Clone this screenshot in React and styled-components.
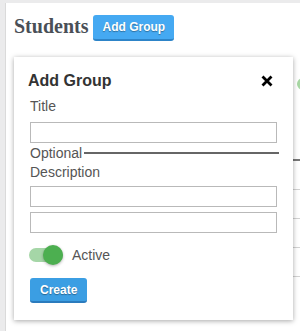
import React from "react";
import styled, { createGlobalStyle } from "styled-components";

const GlobalStyle = createGlobalStyle`
  html, body {
    margin: 0;
    padding: 0;
    background: #ebebec;
    overflow: hidden;
  }
  * { box-sizing: border-box; }
`;

const Page = styled.div`
  position: relative;
  overflow: hidden;
  margin: 3px 0 0 5px;
  width: 295px;
  height: 328px;
  background: #fff;
  border-left: 1px solid #dadada;
  padding: 11px 0 0 8px;
`;

const Header = styled.div`
  display: flex;
  align-items: flex-start;
  gap: 5px;
`;

const PageTitle = styled.h1`
  margin: 0;
  font-family: "Liberation Serif", "DejaVu Serif", serif;
  font-weight: 700;
  font-size: 20px;
  line-height: 24px;
  color: #4a4f57;
`;

const BlueButton = styled.button`
  margin-top: ${(p) => p.$offset || 0}px;
  height: ${(p) => p.$h}px;
  padding: 0 ${(p) => p.$px}px;
  border: none;
  border-bottom: 2px solid ${(p) => p.$dark};
  border-radius: 3px;
  background: ${(p) => p.$bg};
  color: #fff;
  font-family: "Liberation Sans", Arial, sans-serif;
  font-weight: 700;
  font-size: 12px;
  line-height: 1;
  text-shadow: 0 1px 1px rgba(0, 0, 0, 0.35);
  cursor: pointer;
`;

const Toolbar = styled.div`
  display: flex;
  justify-content: flex-end;
  margin-top: 37px;
  margin-right: -9px;
`;

const Dot = styled.span`
  width: 12px;
  height: 12px;
  border-radius: 50%;
  background: #a7d7a3;
`;

const TableHead = styled.div`
  height: 71px;
  border-bottom: 2px solid #777;
  margin-left: 6px;
`;

const TableRow = styled.div`
  height: 29px;
  border-bottom: 1px solid #d2d2d2;
  margin-left: 6px;
`;

const Modal = styled.div`
  position: absolute;
  left: 8px;
  top: 54px;
  width: 279px;
  height: 263px;
  background: #fff;
  box-shadow: 0 1px 5px rgba(0, 0, 0, 0.35);
  padding: 15px 16px 0 14px;
  font-family: "Liberation Sans", Arial, sans-serif;
`;

const ModalHeader = styled.div`
  display: flex;
  justify-content: space-between;
  align-items: center;
`;

const ModalTitle = styled.h2`
  margin: 0;
  font-size: 16px;
  line-height: 18px;
  font-weight: 700;
  color: #333;
`;

const CloseButton = styled.button`
  display: flex;
  padding: 0;
  margin-right: 4px;
  border: none;
  background: none;
  cursor: pointer;
`;

const Form = styled.div`
  display: flex;
  flex-direction: column;
  margin-left: 2px;
`;

const Label = styled.label`
  margin-top: ${(p) => p.$mt}px;
  font-size: 14px;
  line-height: 16px;
  color: #555;
`;

const Input = styled.input`
  margin-top: ${(p) => p.$mt}px;
  height: 21px;
  width: 100%;
  border: 1px solid #b9b9b9;
  background: #fff;
  padding: 0 4px;
`;

const Divider = styled.div`
  display: flex;
  align-items: center;
  gap: 2px;
  margin-top: 2px;
  margin-right: -2px;
  font-size: 14px;
  line-height: 16px;
  color: #555;
`;

const Rule = styled.span`
  flex: 1;
  border-top: 2px solid #666;
`;

const SwitchRow = styled.div`
  display: flex;
  align-items: center;
  gap: 7px;
  margin-top: 12px;
  margin-left: -1px;
  font-size: 14px;
  line-height: 16px;
  color: #555;
`;

const Switch = styled.span`
  position: relative;
  width: 36px;
  height: 20px;
`;

const Track = styled.span`
  position: absolute;
  left: 0;
  top: 3px;
  width: 34px;
  height: 14px;
  border-radius: 7px;
  background: #a5d6a7;
`;

const Knob = styled.span`
  position: absolute;
  left: 14px;
  top: 0;
  width: 20px;
  height: 20px;
  border-radius: 50%;
  background: #4caf50;
  box-shadow: 0 1px 3px rgba(0, 0, 0, 0.3);
`;

const Actions = styled.div`
  margin-top: 13px;
`;

export default function App() {
  return (
    <>
      <GlobalStyle />
      <Page>
        <Header>
          <PageTitle>Students</PageTitle>
          <BlueButton $offset={1} $h={26} $px={9} $bg="#45a9f2" $dark="#2d84c8">
            Add Group
          </BlueButton>
        </Header>
        <Toolbar>
          <Dot />
        </Toolbar>
        <TableHead />
        <TableRow />
        <TableRow />
        <TableRow />
        <TableRow />

        <Modal>
          <ModalHeader>
            <ModalTitle>Add Group</ModalTitle>
            <CloseButton aria-label="Close">
              <svg width="12" height="12" viewBox="0 0 12 12">
                <path d="M1.5 1.5 L10.5 10.5 M10.5 1.5 L1.5 10.5" stroke="#000" strokeWidth="2.8" strokeLinecap="butt" />
              </svg>
            </CloseButton>
          </ModalHeader>
          <Form>
            <Label $mt={8}>Title</Label>
            <Input $mt={8} />
            <Divider>
              Optional
              <Rule />
            </Divider>
            <Label $mt={3}>Description</Label>
            <Input $mt={6} />
            <Input $mt={5} />
            <SwitchRow>
              <Switch>
                <Track />
                <Knob />
              </Switch>
              Active
            </SwitchRow>
            <Actions>
              <BlueButton $h={25} $px={10} $bg="#3b9ee3" $dark="#2b7bbd">
                Create
              </BlueButton>
            </Actions>
          </Form>
        </Modal>
      </Page>
    </>
  );
}
